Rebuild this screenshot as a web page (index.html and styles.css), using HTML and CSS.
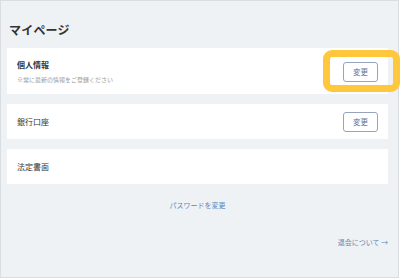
FILE: index.html
```html
<!DOCTYPE html>
<html lang="ja">
<head>
<meta charset="utf-8">
<link rel="stylesheet" href="styles.css">
</head>
<body>
<div class="stage">
  <div class="frame">
    <h1 class="title">マイページ</h1>
    <div class="list">
      <div class="card card-tall">
        <div class="info">
          <div class="label label-bold">個人情報</div>
          <div class="note">※常に最新の情報をご登録ください</div>
        </div>
        <button class="btn">変更</button>
      </div>
      <div class="card">
        <div class="label">銀行口座</div>
        <button class="btn">変更</button>
      </div>
      <div class="card">
        <div class="label">法定書面</div>
      </div>
    </div>
    <div class="pw"><a class="link">パスワードを変更</a></div>
    <div class="leave"><a class="link">退会について →</a></div>
  </div>
  <div class="highlight"></div>
</div>
</body>
</html>
```
FILE: styles.css
```css
* { box-sizing: border-box; }
html, body { margin: 0; padding: 0; background: #ffffff; }
body { font-family: "Noto Sans CJK JP", "Noto Sans", sans-serif; }
.stage { position: relative; width: 400px; height: 279px; }
.frame {
  width: 399px;
  height: 278px;
  border: 1px solid #dadee1;
  background: #eef2f4;
  padding: 0 10px 0 6px;
  display: flex;
  flex-direction: column;
}
.title {
  margin: 21px 0 10px 2px;
  font-size: 12px;
  line-height: 16px;
  font-weight: 700;
  color: #333333;
  letter-spacing: 0.2px;
}
.list { display: flex; flex-direction: column; gap: 10px; }
.card {
  background: #ffffff;
  min-height: 35px;
  padding: 0 10px;
  display: flex;
  align-items: center;
  justify-content: space-between;
}
.card-tall { padding: 11px 10px 10px; min-height: 46px; }
.info { display: flex; flex-direction: column; gap: 4px; }
.label { font-size: 8px; line-height: 12px; color: #333333; }
.label-bold { font-weight: 700; }
.note { font-size: 6px; line-height: 9px; color: #9a9a9a; }
.btn {
  width: 35px;
  height: 20px;
  padding: 0;
  border: 1px solid #96a3c1;
  border-radius: 3px;
  background: #ffffff;
  font-family: inherit;
  font-size: 7.5px;
  line-height: 1;
  color: #5f6f96;
}
.pw { margin-top: 16px; text-align: center; font-size: 7px; line-height: 10px; }
.leave { margin-top: 27px; text-align: right; font-size: 7px; line-height: 10px; }
.link { color: #5f86ba; text-decoration: none; }
.highlight {
  position: absolute;
  left: 323px;
  top: 50px;
  width: 77px;
  height: 42px;
  border: 7.5px solid #ffc83c;
  border-radius: 9px;
}
```
